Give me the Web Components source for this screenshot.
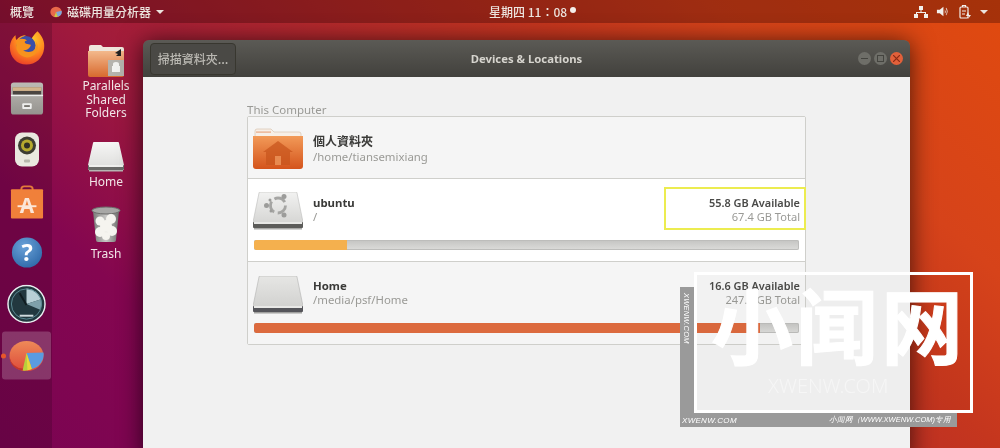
<!DOCTYPE html>
<html>
<head>
<meta charset="utf-8">
<style>
html,body{margin:0;padding:0;overflow:hidden}
body{font-family:"Noto Sans","Noto Sans CJK TC",sans-serif}
</style>
</head>
<body>
<ubuntu-desk>
    <top-bar slot="top"></top-bar>
    <app-dock slot="dock">
        <dock-item icon="firefox"></dock-item>
        <dock-item icon="files"></dock-item>
        <dock-item icon="speaker"></dock-item>
        <dock-item icon="bag"></dock-item>
        <dock-item icon="help"></dock-item>
        <dock-item icon="dial"></dock-item>
        <dock-item icon="pie" active></dock-item>
    </app-dock>
    <desk-icon slot="icons" icon="shared" gap="2" style="margin-top:22px">Parallels<br>Shared<br>Folders</desk-icon>
    <desk-icon slot="icons" icon="drive" gap="3" style="margin-top:22px">Home</desk-icon>
    <desk-icon slot="icons" icon="trash" gap="5" style="margin-top:18px">Trash</desk-icon>
    <app-window slot="window" title="Devices &amp; Locations" action="掃描資料夾...">
        <place-list label="This Computer">
            <place-row icon="home" name="個人資料夾" path="/home/tiansemixiang" h="62" pad="11" nudge="-1"></place-row>
            <place-row icon="ubuntu" name="ubuntu" path="/" avail="55.8 GB Available" total="67.4 GB Total" used="17" color="#f4b04e" mark h="83" pad="13" gap="10" nudge="-4"></place-row>
            <place-row icon="plain" name="Home" path="/media/psf/Home" avail="16.6 GB Available" total="247.8 GB Total" used="92.800" color="#dc6a3e" shade h="82" pad="14" gap="9" nudge="-6"></place-row>
        </place-list>
    </app-window>
    <water-mark slot="over"></water-mark>
</ubuntu-desk>
<script>
const ICONS = {
    firefox: `<svg viewBox="0 0 40 40" width="38" height="38">
        <defs><radialGradient id="ff" cx=".6" cy=".25" r=".85"><stop offset="0" stop-color="#ffd22e"/><stop offset=".5" stop-color="#ff8a1e"/><stop offset="1" stop-color="#e8322a"/></radialGradient></defs>
        <path d="M31 3c5 5 8 11 7 18-1 10-9 17-18.500 17C9 38 2 30 2 20 2 14 5 9 8 7c0 2 0 4 1 5 2-3 6-5 10-5-2 1-3 3-3 4 3 0 6 2 7 4 1-4 4-8 8-12z" fill="url(#ff)"/>
        <circle cx="19" cy="18" r="10" fill="#3b4fa8"/>
        <path d="M10 12c4-2 9-1 10 1-3 0-3 2-1 3l5 1c0 3-4 6-8 6 4 3 10 2 13-2 2-4 1-8-2-10 4 3 6 9 3 14-3 5-10 7-15 4-6-3-8-11-5-17z" fill="#f7931e"/>
    </svg>`,
    files: `<svg viewBox="0 0 36 36" width="34" height="36">
        <defs><linearGradient id="fc" x1="0" y1="0" x2="0" y2="1"><stop offset="0" stop-color="#bdbbb6"/><stop offset="1" stop-color="#95938e"/></linearGradient></defs>
        <rect x="1" y="1" width="34" height="34" rx="3" fill="url(#fc)"/>
        <rect x="3" y="6" width="30" height="8" fill="#4a4540"/>
        <rect x="3" y="6" width="30" height="4" fill="#d2b48c"/>
        <rect x="1" y="14" width="34" height="1.500" fill="#eeeeec"/>
        <rect x="13" y="23" width="10" height="6" rx="1" fill="#efefed"/><rect x="15" y="25" width="6" height="2" fill="#77756f"/>
    </svg>`,
    speaker: `<svg viewBox="0 0 26 36" width="26" height="36">
        <rect x="1" y="1" width="24" height="34" rx="7" fill="#e9e8df"/>
        <circle cx="13" cy="14" r="9" fill="#3d3d33"/><circle cx="13" cy="14" r="6" fill="#b5a92e"/><circle cx="13" cy="14" r="3" fill="#2f2f26"/>
        <rect x="10" y="28" width="6" height="3" rx="1" fill="#b7b6ab"/>
    </svg>`,
    bag: `<svg viewBox="0 0 36 36" width="34" height="36">
        <path d="M11 8V5q0-4 4-4h6q4 0 4 4v3h-2V5q0-2-2-2h-6q-2 0-2 2v3z" fill="#e27a3a"/>
        <rect x="1" y="5" width="34" height="31" rx="1" fill="#f0803a"/>
        <text x="18" y="30" font-family="Noto Sans,sans-serif" font-weight="700" font-size="22" text-anchor="middle" fill="#fbe6d8">A</text>
        <rect x="8" y="22" width="20" height="2" fill="#fbe6d8"/>
    </svg>`,
    help: `<svg viewBox="0 0 34 34" width="32" height="32">
        <defs><radialGradient id="hp" cx=".4" cy=".3" r=".8"><stop offset="0" stop-color="#6aa2d8"/><stop offset="1" stop-color="#2b66a6"/></radialGradient></defs>
        <circle cx="17" cy="17" r="16" fill="url(#hp)"/>
        <text x="17" y="26" font-family="Noto Sans,sans-serif" font-weight="700" font-size="25" text-anchor="middle" fill="#fff">?</text>
    </svg>`,
    dial: `<svg viewBox="0 0 40 40" width="39" height="39">
        <circle cx="20" cy="20" r="19" fill="#22383f" stroke="#e9eef0" stroke-width="1.500"/>
        <path d="M20 20V4a16 16 0 0 1 15 11z" fill="#b8cfd6"/>
        <path d="M20 20 35 15a16 16 0 0 1-1 11z" fill="#7fa0aa"/>
        <circle cx="20" cy="20" r="15.500" fill="none" stroke="#5c8a94" stroke-width="1"/>
        <path d="M20 21 13 9" stroke="#101c20" stroke-width="2"/>
        <rect x="13" y="31" width="14" height="2" fill="#cfdadd"/>
    </svg>`,
    pie: `<svg viewBox="0 0 36 34" width="35" height="33">
        <defs><linearGradient id="pr" x1="0" y1="0" x2="0" y2="1"><stop offset="0" stop-color="#ee8a58"/><stop offset="1" stop-color="#dd4a3a"/></linearGradient></defs>
        <ellipse cx="18" cy="17" rx="17.500" ry="15.500" fill="url(#pr)"/>
        <path d="M18 14 35.500 13.500a17.500 15.500 0 0 1-12 17z" fill="#5a9be0"/>
        <path d="M18 14 23.500 30.500q-5 2-9.500 1.500z" fill="#b8cf3c"/>
        <path d="M18 14 23.500 30.500q-2.500 1-4.500 1.200z" fill="#e8d83c"/>
        <path d="M.5 18q1 12 13.500 14l.3-2Q3 29 .5 18z" fill="#c0352c"/>
    </svg>`,
    shared: `<svg viewBox="0 0 36 32" width="36" height="32">
        <defs><linearGradient id="sf" x1="0" y1="0" x2="0" y2="1"><stop offset="0" stop-color="#f3b98c"/><stop offset="1" stop-color="#d8692e"/></linearGradient></defs>
        <path d="M1 2q0-2 2-2h10l2 2h19q2 0 2 2v6H1z" fill="#efe6dc"/>
        <path d="M0 6h36v24q0 2-2 2H2q-2 0-2-2z" fill="url(#sf)"/>
        <path d="M27 8l6-4v7h-5l2-2z" fill="#222"/>
        <rect x="20" y="15" width="16" height="16" fill="#b5b3ad"/>
        <path d="M25 21v-2q0-2 3-2t3 2v2h1v6h-8v-6z" fill="#f2f2f0"/>
    </svg>`,
    drive: `<svg viewBox="0 0 36 30" width="36" height="30">
        <defs><linearGradient id="dr" x1="0" y1="0" x2="0" y2="1"><stop offset="0" stop-color="#f6f6f5"/><stop offset="1" stop-color="#dcdcda"/></linearGradient></defs>
        <path d="M5 1q0-1 1-1h24q1 0 1 1l5 22v5H0v-5z" fill="url(#dr)"/>
        <rect x="0" y="23" width="36" height="5" rx="1" fill="#6a6a68"/>
        <rect x="1" y="23" width="34" height="2" fill="#efefed"/>
        <rect x="1" y="28" width="34" height="1.500" fill="#b5b5b2"/>
    </svg>`,
    trash: `<svg viewBox="0 0 30 36" width="30" height="36">
        <defs><linearGradient id="tr" x1="0" y1="0" x2="1" y2="0"><stop offset="0" stop-color="#7a7a78"/><stop offset=".5" stop-color="#c8c8c6"/><stop offset="1" stop-color="#6e6e6c"/></linearGradient></defs>
        <path d="M2 5 5 34q0 2 2 2h16q2 0 2-2l3-29z" fill="url(#tr)"/>
        <ellipse cx="15" cy="4.500" rx="14" ry="3.500" fill="#a8a8a6" stroke="#6c6c6a"/>
        <g fill="#f5f4ef"><circle cx="9" cy="15" r="4.500"/><circle cx="20" cy="13" r="5"/><circle cx="15" cy="20" r="6"/><circle cx="9" cy="26" r="5"/><circle cx="21" cy="25" r="5"/><circle cx="15" cy="30" r="4"/></g>
    </svg>`,
    home: `<svg viewBox="0 0 50 42" width="50" height="42">
        <defs><linearGradient id="hf" x1="0" y1="0" x2="0" y2="1"><stop offset="0" stop-color="#f29a58"/><stop offset="1" stop-color="#d4541c"/></linearGradient></defs>
        <path d="M2 3q0-2 2-2h14l3 3h25q2 0 2 2v8H2z" fill="#f7efe7" stroke="#dcc9b8" stroke-width=".8"/>
        <rect x="3" y="3.500" width="15" height="1.200" fill="#e8a884"/>
        <path d="M0 9h50v30q0 3-3 3H3q-3 0-3-3z" fill="url(#hf)" transform="translate(0 -1)"/>
        <path d="M25 13 10 24h3v13h24V24h3z" fill="#c8551e" opacity=".75"/>
        <rect x="22" y="28" width="6" height="9" fill="#e88a50"/>
    </svg>`,
    ubuntu: `<svg viewBox="0 0 50 38" width="50" height="38">
        <defs><linearGradient id="ud" x1="0" y1="0" x2="0" y2="1"><stop offset="0" stop-color="#f2f2f1"/><stop offset="1" stop-color="#d2d2d0"/></linearGradient></defs>
        <path d="M6 1q0-1 1-1h36q1 0 1 1l6 29v5H0v-5z" fill="url(#ud)" stroke="#bcbcba" stroke-width=".6"/>
        <rect x="0" y="30" width="50" height="6" rx="1" fill="#5c5c5a"/>
        <rect x="1" y="30" width="48" height="2" fill="#e8e8e6"/>
        <rect x="1" y="36" width="48" height="1.500" fill="#a9a9a7"/>
        <circle cx="25" cy="13.500" r="7.500" fill="none" stroke="#a5a5a3" stroke-width="2.800" stroke-dasharray="12 3.700"/>
        <g fill="#9c9c9a"><circle cx="13.500" cy="13.500" r="2.500"/><circle cx="31" cy="4.500" r="2.500"/><circle cx="31" cy="23" r="2.500"/><circle cx="17" cy="8" r="1.500"/><circle cx="18" cy="19" r="1.500"/></g>
    </svg>`,
    plain: `<svg viewBox="0 0 50 38" width="50" height="38">
        <defs><linearGradient id="pd" x1="0" y1="0" x2="0" y2="1"><stop offset="0" stop-color="#e6e6e4"/><stop offset="1" stop-color="#cfcfcd"/></linearGradient></defs>
        <path d="M6 1q0-1 1-1h36q1 0 1 1l6 29v5H0v-5z" fill="url(#pd)" stroke="#b2b2b0" stroke-width=".6"/>
        <rect x="0" y="30" width="50" height="6" rx="1" fill="#55555a"/>
        <rect x="1" y="30" width="48" height="2" fill="#e8e8e6"/>
        <rect x="1" y="36" width="48" height="1.500" fill="#a0a09e"/>
    </svg>`
};

customElements.define('ubuntu-desk', class extends HTMLElement {
    constructor() {
        super();
        this.attachShadow({ mode: 'open' }).innerHTML = `
        <style>
        :host {
            display:flex;flex-direction:column;position:relative;
            width:1000px;height:448px;overflow:hidden;
            background:linear-gradient(43deg,#7a0452 0,#840650 19.500%,#a01a3c 35.500%,#c5361e 67.500%,#d6431a 80%,#e04a0f 100%);
            filter:blur(.35px);
        }
        main { display:flex;flex:1;min-height:0; }
        .icons { display:flex;flex-direction:column;width:54px;margin:0 10px 0 27px;flex:none; }
        .win { display:block;margin-top:17px;flex:1;min-height:0; }
        </style>
        <slot name="top"></slot>
        <main>
            <slot name="dock"></slot>
            <div class="icons"><slot name="icons"></slot></div>
            <div class="win"><slot name="window"></slot></div>
        </main>
        <slot name="over"></slot>`;
    }
});

customElements.define('top-bar', class extends HTMLElement {
    constructor() {
        super();
        this.attachShadow({ mode: 'open' }).innerHTML = `
        <style>
        :host {
            display:flex;align-items:center;height:23px;flex:none;
            padding:0 10px;box-sizing:border-box;
            background:rgba(45,0,0,.32);
            color:#ece4de;font:500 12px "Noto Sans CJK TC",sans-serif;
        }
        .app { display:flex;align-items:center;gap:5px;margin-left:16px; }
        .clock { position:absolute;left:489px;display:flex;align-items:center;gap:3px;font-weight:500; }
        .clock i { width:6px;height:6px;border-radius:50%;background:#f4eeea;margin-top:-3px; }
        .tray { display:flex;align-items:center;gap:8px;margin-left:auto;margin-right:2px; }
        .arrow { width:0;height:0;border:4px solid transparent;border-top:4px solid currentColor;border-bottom:0; }
        svg { display:block; }
        </style>
        <span>概覽</span>
        <span class="app">
            <svg viewBox="0 0 36 34" width="12" height="12"><ellipse cx="18" cy="17" rx="17" ry="16" fill="#e8694a"/><path d="M35 13a17 16 0 0 1-12 18l-5-14z" fill="#7fa6d8"/><path d="M18 17l5 14q-5 2-10 0z" fill="#c9d24a"/></svg>
            <span>磁碟用量分析器</span>
            <i class="arrow"></i>
        </span>
        <span class="clock"><span>星期四 11：08</span><i></i></span>
        <span class="tray">
            <svg viewBox="0 0 14 14" width="14" height="14" fill="#f2efec"><rect x="5" y="1" width="4" height="4"/><rect x="0" y="9" width="4" height="4"/><rect x="10" y="9" width="4" height="4"/><path d="M6.500 5h1v2H12v2h-1V8H3v1H2V7h4.500z"/></svg>
            <svg viewBox="0 0 14 14" width="13" height="13" fill="#f2efec"><path d="M1 5h3l4-3v10L4 9H1z"/><path d="M9.500 4.500q1.800 2.500 0 5zM11 3q3 4 0 8l-.500-.500q2.300-3.500 0-7z"/></svg>
            <svg viewBox="0 0 14 16" width="14" height="16" fill="none" stroke="#f2efec" stroke-width="1.200" style="margin-left:1px"><rect x="2" y="3" width="8" height="11" rx="1"/><path d="M4.500 3V1.500h3V3M4 7h4M4 10h3"/><path d="M10 8 8 12h3l-1 3 3-4h-2z" fill="#f2efec" stroke="none"/></svg>
            <i class="arrow"></i>
        </span>`;
    }
});

customElements.define('app-dock', class extends HTMLElement {
    constructor() {
        super();
        this.attachShadow({ mode: 'open' }).innerHTML = `
        <style>
        :host {
            display:flex;flex-direction:column;flex:none;
            width:52px;
            background:rgba(30,0,20,.2);
        }
        </style>
        <slot></slot>`;
    }
});

customElements.define('dock-item', class extends HTMLElement {
    constructor() {
        super();
        const on = this.hasAttribute('active');
        this.attachShadow({ mode: 'open' }).innerHTML = `
        <style>
        :host { display:flex;align-items:center;justify-content:center;height:51.400px;position:relative;flex:none;transform:translateY(-1.500px); }
        .tile { display:flex;align-items:center;justify-content:center;width:49px;height:48px;border-radius:3px;margin-left:1px;
            ${on ? 'background:rgba(255,255,255,.2);' : ''} }
        .dot { position:absolute;left:1px;top:50%;width:5px;height:5px;margin-top:-2.500px;border-radius:50%;background:#e8562a; }
        svg { display:block; }
        </style>
        <div class="tile">${ICONS[this.getAttribute('icon')]}</div>
        ${on ? '<i class="dot"></i>' : ''}`;
    }
});

customElements.define('desk-icon', class extends HTMLElement {
    constructor() {
        super();
        this.attachShadow({ mode: 'open' }).innerHTML = `
        <style>
        :host {
            display:flex;flex-direction:column;align-items:center;
            color:#f2e6e8;font:12px/13.500px "Noto Sans",sans-serif;text-align:center;
        }
        svg { display:block; }
        </style>
        ${ICONS[this.getAttribute('icon')]}
        <div style="margin-top:${this.getAttribute('gap')}px"><slot></slot></div>`;
    }
});

customElements.define('app-window', class extends HTMLElement {
    constructor() {
        super();
        this.attachShadow({ mode: 'open' }).innerHTML = `
        <style>
        :host {
            display:flex;flex-direction:column;
            width:767px;height:420px;
            border-radius:6px 6px 0 0;
            box-shadow:0 2px 24px rgba(0,0,0,.68);
        }
        header {
            display:flex;align-items:center;flex:none;position:relative;
            height:37px;padding:0 7px;box-sizing:border-box;
            background:linear-gradient(#5b5a55,#42413d);
            border-radius:6px 6px 0 0;
            color:#d6d4ce;font:700 11.300px "Noto Sans","Noto Sans CJK TC",sans-serif;
        }
        button {
            font:500 12px "Noto Sans CJK TC",sans-serif;color:#bab8b2;
            height:32px;width:86px;padding:0;box-sizing:border-box;
            background:#4a4945;border:1px solid #38372f;border-radius:4px;
        }
        h1 { position:absolute;left:0;right:0;margin:0;text-align:center;font:inherit;pointer-events:none; }
        .ctl { display:flex;gap:3px;margin-left:auto; }
        .ctl i { display:flex;align-items:center;justify-content:center;width:13px;height:13px;border-radius:50%;background:#6e6e68; }
        .ctl i:last-child { background:#e2603a; }
        .ctl svg { display:block; }
        section { flex:1;background:#f1f1f1;padding:26px 105px 0 104px; }
        </style>
        <header>
            <button>${this.getAttribute('action')}</button>
            <h1>${this.getAttribute('title').replace('&', '&amp;')}</h1>
            <div class="ctl">
                <i><svg width="7" height="7"><path d="M0 3.500h7" stroke="#44443f"/></svg></i>
                <i><svg width="7" height="7"><rect x=".5" y=".5" width="6" height="6" fill="none" stroke="#44443f"/></svg></i>
                <i><svg width="7" height="7"><path d="M0 0l7 7M7 0 0 7" stroke="#8a2a14" stroke-width="1.200"/></svg></i>
            </div>
        </header>
        <section><slot></slot></section>`;
    }
});

customElements.define('place-list', class extends HTMLElement {
    constructor() {
        super();
        this.attachShadow({ mode: 'open' }).innerHTML = `
        <style>
        :host { display:block;width:559px;font-family:"Noto Sans","Noto Sans CJK TC",sans-serif; }
        h2 { margin:0;height:13px;font:11.500px/13px "Noto Sans",sans-serif;color:#9a9a96; }
        div { border:1px solid #cfcfcb;border-radius:2px;display:flex;flex-direction:column;background:#f6f6f6; }
        </style>
        <h2>${this.getAttribute('label')}</h2>
        <div><slot></slot></div>`;
    }
});

customElements.define('place-row', class extends HTMLElement {
    constructor() {
        super();
        const g = n => this.getAttribute(n);
        const stats = g('avail') ? `<div class="stats"><b>${g('avail')}</b><span>${g('total')}</span></div>` : '';
        const bar = g('used') ? `<usage-bar used="${g('used')}" color="${g('color')}" style="margin-top:${g('gap')}px"></usage-bar>` : '';
        this.attachShadow({ mode: 'open' }).innerHTML = `
        <style>
        :host {
            display:flex;flex-direction:column;height:${g('h')}px;box-sizing:border-box;position:relative;
            padding:${g('pad')}px 5px 0 5px;
            background:${g('shade') !== null || !g('used') ? '#f5f5f5' : '#fff'};
        }
        :host(:not(:last-child)) { border-bottom:1px solid #cfcfcb; }
        .top { display:flex;align-items:center;gap:10px; }
        svg { display:block; }
        .name { display:flex;flex-direction:column;flex:1;margin-top:${g('nudge')}px; }
        .name b { font:700 ${g('used') ? 11.4 : 12}px/${g('used') ? 15 : 17}px "Noto Sans","Noto Sans CJK TC",sans-serif;color:#3a3a38; }
        .name span { font:11.400px/14px "Noto Sans",sans-serif;color:#9a9a96; }
        .stats { display:flex;flex-direction:column;align-items:flex-end;margin-top:${g('nudge')}px; }
        .stats b { font:600 10.900px/15px "Noto Sans",sans-serif;color:#4a4a48; }
        .stats span { font:11.100px/14px "Noto Sans",sans-serif;color:#9a9a96; }
        .mark { position:absolute;left:416px;top:8px;width:142px;height:43px;box-sizing:border-box;border:2px solid #ecec50; }
        </style>
        <div class="top">
            ${ICONS[g('icon')]}
            <div class="name"><b>${g('name')}</b><span>${g('path')}</span></div>
            ${stats}
        </div>
        ${bar}
        ${this.hasAttribute('mark') ? '<i class="mark"></i>' : ''}`;
    }
});

customElements.define('usage-bar', class extends HTMLElement {
    constructor() {
        super();
        this.attachShadow({ mode: 'open' }).innerHTML = `
        <style>
        :host {
            display:block;height:10px;margin-left:1px;margin-right:1px;flex:none;
            background:linear-gradient(#c4c4c2,#dcdcda);border-radius:2px;overflow:hidden;
            box-shadow:inset 0 0 0 1px #bdbdbb;
        }
        i { display:block;height:100%;background:${this.getAttribute('color')};width:${this.getAttribute('used')}%;border-radius:2px 0 0 2px; }
        </style>
        <i></i>`;
    }
});

customElements.define('water-mark', class extends HTMLElement {
    constructor() {
        super();
        this.attachShadow({ mode: 'open' }).innerHTML = `
        <style>
        :host { position:absolute;left:680px;top:272px;width:293px;height:155px;color:#fff;font-family:"Noto Sans CJK SC",sans-serif; }
        .l { position:absolute;left:0;top:15px;width:14px;height:126px;background:#9a9a9a; }
        .b { position:absolute;left:0;top:141px;width:277px;height:14px;background:#9a9a9a;display:flex;justify-content:space-between;align-items:center;padding:0 6px 0 2px;box-sizing:border-box;font:italic 7.500px "Liberation Sans",sans-serif; }
        .b span:first-child { font-size:8px;letter-spacing:.3px; }
        .v { position:absolute;left:2px;top:21px;writing-mode:vertical-rl;font:italic 7.500px "Liberation Sans",sans-serif;letter-spacing:.2px; }
        .box { position:absolute;left:14px;top:0;width:279px;height:141px;box-sizing:border-box;border:3px solid #fff;background:rgba(0,0,0,.012); }
        .big { position:absolute;left:14px;top:-1px;font:700 82px/98px "Noto Sans CJK SC",sans-serif;letter-spacing:3px;white-space:nowrap;-webkit-text-stroke:1px #fff; }
        .url { position:absolute;left:71px;top:100px;font:300 20px/22px "Noto Sans",sans-serif;color:rgba(255,255,255,.45);white-space:nowrap; }
        </style>
        <div class="l"></div>
        <div class="b"><span>XWENW.COM</span><span>小闻网（WWW.XWENW.COM)专用</span></div>
        <div class="v">XWENW.COM</div>
        <div class="box"><div class="big">小闻网</div><div class="url">XWENW.COM</div></div>`;
    }
});
</script>
</body>
</html>
